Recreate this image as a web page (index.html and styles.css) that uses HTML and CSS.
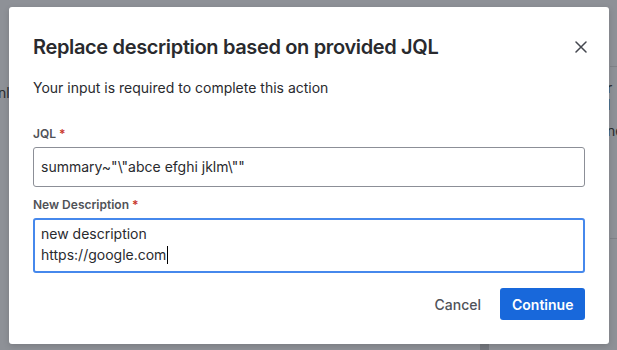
FILE: index.html
```html
<!DOCTYPE html>
<html>
  <head>
    <meta charset="UTF-8">
    <title>Replace description</title>
    <link rel="stylesheet" href="styles.css">
  </head>
  <body>
    <!-- page behind the overlay -->
    <div class="backdrop">
      <span class="bg-text bg-left">nl</span>
      <span class="bg-text bg-right-1">r l</span>
      <span class="bg-text bg-right-2">ne</span>
      <div class="bg-rule bg-rule-1"></div>
      <div class="bg-rule bg-rule-2"></div>
      <div class="bg-bar"></div>
    </div>

    <div class="dialog">
      <div class="dialog-header">
        <h1>Replace description based on provided JQL</h1>
        <button class="close-btn" aria-label="Close">
          <svg width="12" height="12" viewBox="0 0 12 12">
            <path d="M1 1 L11 11 M11 1 L1 11" stroke="#44474f" stroke-width="1.5" stroke-linecap="round" fill="none"/>
          </svg>
        </button>
      </div>

      <p class="intro">Your input is required to complete this action</p>

      <div class="field">
        <label class="field-label">JQL <span class="req">*</span></label>
        <div class="text-input">summary~"\"abce efghi jklm\""</div>
      </div>

      <div class="field">
        <label class="field-label">New Description <span class="req">*</span></label>
        <div class="text-area">
          <div>new description</div>
          <div>https://google.com<span class="caret"></span></div>
        </div>
      </div>

      <div class="dialog-footer">
        <button class="btn btn-subtle">Cancel</button>
        <button class="btn btn-primary">Continue</button>
      </div>
    </div>
  </body>
</html>
```

FILE: styles.css
```css
body {
  margin: 0;
  height: 350px;
  padding: 7px 8px 0 9px;
  box-sizing: border-box;
  background-color: #8e9197;
  font-family: Inter, "Noto Sans", Arial, sans-serif;
  color: #292a2e;
  overflow: hidden;
}

/* faint bits of the page under the overlay */
.backdrop {
  position: absolute;
  inset: 0;
}

.bg-text {
  position: absolute;
  font-size: 14px;
  color: #2a2c30;
}

.bg-left {
  left: -2px;
  top: 84px;
}

.bg-right-1 {
  left: 607px;
  top: 79px;
}

.bg-right-2 {
  left: 607px;
  top: 122px;
}

.bg-rule {
  position: absolute;
  left: 610px;
  right: 0;
  height: 1px;
  background-color: #7f8288;
}

.bg-rule-1 {
  top: 66px;
}

.bg-rule-2 {
  top: 238px;
}

.bg-bar {
  position: absolute;
  left: 480px;
  width: 9px;
  top: 344px;
  bottom: 0;
  background-color: #75787e;
}

.dialog {
  position: relative;
  width: 600px;
  height: 337px;
  box-sizing: border-box;
  padding: 24px 24px 0 24px;
  background-color: #fff;
  border-radius: 3px;
  box-shadow: 0 2px 6px rgba(0, 0, 0, 0.15);
}

.dialog-header {
  display: flex;
  align-items: center;
  justify-content: space-between;
}

h1 {
  margin: 0;
  font-size: 20px;
  line-height: 32px;
  font-weight: 600;
  color: #292a2e;
  letter-spacing: -0.35px;
}

.close-btn {
  display: flex;
  align-items: center;
  justify-content: center;
  width: 24px;
  height: 24px;
  margin-right: -8px;
  padding: 0;
  border: none;
  background: none;
  cursor: pointer;
}

.intro {
  margin: 15px 0 0 0;
  font-size: 14px;
  line-height: 20px;
}

.field {
  display: flex;
  flex-direction: column;
  gap: 5px;
  margin-top: 10px;
}

.intro + .field {
  margin-top: 28px;
}

.field-label {
  font-size: 12px;
  line-height: 16px;
  font-weight: 600;
  color: #505258;
}

.req {
  color: #c9372c;
}

.text-input {
  height: 40px;
  box-sizing: border-box;
  padding: 0 7px;
  border: 1px solid #8c8f97;
  border-radius: 3px;
  font-size: 14px;
  line-height: 38px;
  white-space: pre;
}

.text-area {
  height: 55px;
  box-sizing: border-box;
  padding: 3px 6px 0 6px;
  border: 2px solid #4688ec;
  border-radius: 3px;
  font-size: 14px;
  line-height: 21px;
}

.caret {
  display: inline-block;
  width: 1px;
  height: 18px;
  margin-left: 1px;
  vertical-align: -4px;
  background-color: #000;
}

.dialog-footer {
  display: flex;
  justify-content: flex-end;
  gap: 7px;
  margin-top: 15px;
}

.btn {
  height: 32px;
  padding: 0 12px;
  border: none;
  border-radius: 3px;
  font-family: inherit;
  font-size: 14px;
  font-weight: 500;
  cursor: pointer;
}

.btn-subtle {
  background: none;
  color: #505258;
}

.btn-primary {
  width: 85px;
  background-color: #1868db;
  color: #fff;
  font-weight: 600;
}
```
